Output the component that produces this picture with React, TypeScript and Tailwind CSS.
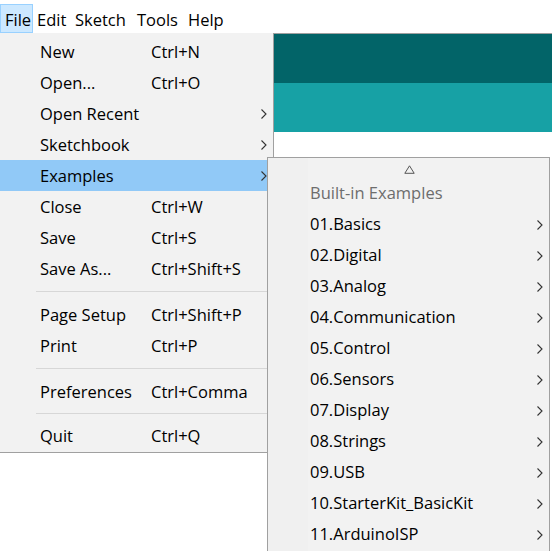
import React from "react";

const font = { fontFamily: '"Open Sans", "Noto Sans", sans-serif' };

function Chevron() {
  return (
    <svg width="6" height="10" viewBox="0 0 6 10" className="shrink-0">
      <polyline points="0.5,0.5 5,5 0.5,9.5" fill="none" stroke="#333" strokeWidth="1.1" />
    </svg>
  );
}

type Item = { kind: "item"; label: string; shortcut?: string; sub?: boolean; active?: boolean } | { kind: "sep"; h: number };

const fileItems: Item[] = [
  { kind: "item", label: "New", shortcut: "Ctrl+N" },
  { kind: "item", label: "Open...", shortcut: "Ctrl+O" },
  { kind: "item", label: "Open Recent", sub: true },
  { kind: "item", label: "Sketchbook", sub: true },
  { kind: "item", label: "Examples", sub: true, active: true },
  { kind: "item", label: "Close", shortcut: "Ctrl+W" },
  { kind: "item", label: "Save", shortcut: "Ctrl+S" },
  { kind: "item", label: "Save As...", shortcut: "Ctrl+Shift+S" },
  { kind: "sep", h: 15 },
  { kind: "item", label: "Page Setup", shortcut: "Ctrl+Shift+P" },
  { kind: "item", label: "Print", shortcut: "Ctrl+P" },
  { kind: "sep", h: 15 },
  { kind: "item", label: "Preferences", shortcut: "Ctrl+Comma" },
  { kind: "sep", h: 13 },
  { kind: "item", label: "Quit", shortcut: "Ctrl+Q" },
];

const examples = [
  "01.Basics",
  "02.Digital",
  "03.Analog",
  "04.Communication",
  "05.Control",
  "06.Sensors",
  "07.Display",
  "08.Strings",
  "09.USB",
  "10.StarterKit_BasicKit",
  "11.ArduinoISP",
];

const menuBar = [
  { label: "File", w: "w-[33px]", active: true },
  { label: "Edit", w: "w-[38px]" },
  { label: "Sketch", w: "w-[62px]" },
  { label: "Tools", w: "w-[51px]" },
  { label: "Help", w: "w-[50px]" },
];

export default function App() {
  return (
    <div className="relative w-[552px] h-[551px] overflow-hidden bg-white text-[16.5px] text-black" style={font}>
      {/* menu bar */}
      <div className="flex h-[33px] bg-white">
        {menuBar.map((m) => (
          <div
            key={m.label}
            className={`${m.w} h-[29px] mt-[4px] flex items-center pl-[4px] leading-none ${
              m.active ? "bg-[#cce8ff] border border-[#99d1ff] pl-[3px]" : ""
            }`}
          >
            <span className="mt-[3px]">{m.label}</span>
          </div>
        ))}
      </div>

      {/* editor behind */}
      <div className="flex flex-col border-t border-[#a0a0a0]">
        <div className="h-[49px] bg-[#026468]" />
        <div className="h-[49px] bg-[#17a1a5]" />
      </div>

      {/* File menu */}
      <div className="absolute left-0 top-[33px] w-[274px] bg-[#f2f2f2] border-r border-b border-[#a0a0a0] pt-[3px] pb-[1px]">
        {fileItems.map((it, i) =>
          it.kind === "sep" ? (
            <div key={i} className="flex items-center pl-[36px]" style={{ height: it.h }}>
              <div className="h-px w-full bg-[#d7d7d7]" />
            </div>
          ) : (
            <div
              key={i}
              className={`flex items-center h-[31px] pl-[40px] pr-[6px] ${it.active ? "bg-[#91c9f7]" : ""}`}
            >
              <span className="w-[111px] mt-[2px]">{it.label}</span>
              <span className="flex-1 mt-[2px]">{it.shortcut}</span>
              {it.sub && <Chevron />}
            </div>
          )
        )}
      </div>

      {/* Examples submenu */}
      <div className="absolute left-[267px] top-[157px] w-[283px] h-[400px] bg-[#f2f2f2] border border-[#a0a0a0] flex">
        <div className="w-[40px] bg-[#f0f0f0]" />
        <div className="flex-1 flex flex-col">
          <div className="h-[20px] flex justify-center pr-[38px] pt-[7px]">
            <svg width="11" height="9" viewBox="0 0 11 9">
              <polygon points="5.5,0.8 10.2,8.3 0.8,8.3" fill="none" stroke="#555" strokeWidth="1" />
            </svg>
          </div>
          <div className="h-[31px] flex items-center pl-[2px] text-[#6d6d6d]">
            <span>Built-in Examples</span>
          </div>
          {examples.map((e) => (
            <div key={e} className="h-[31px] flex items-center pl-[2px] pr-[6px]">
              <span className="flex-1">{e}</span>
              <Chevron />
            </div>
          ))}
        </div>
      </div>
    </div>
  );
}
